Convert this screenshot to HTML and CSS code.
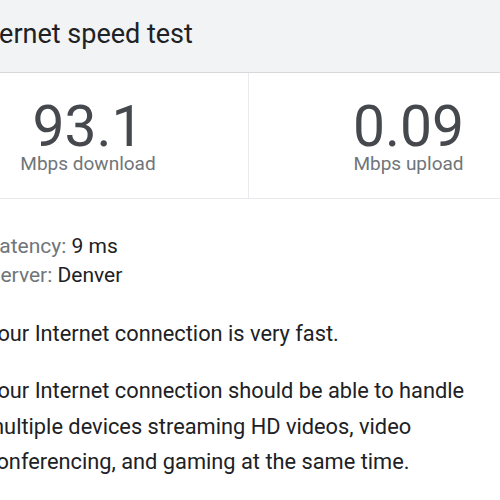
FILE: index.html
```html
<!DOCTYPE html>
<html>
<head>
<meta charset="utf-8">
<link rel="stylesheet" href="styles.css">
</head>
<body>
<div class="page">
  <div class="header">
    <h1 class="title">Internet speed test</h1>
  </div>
  <div class="stats">
    <div class="stat">
      <div class="value">93.1</div>
      <div class="unit">Mbps download</div>
    </div>
    <div class="stat">
      <div class="value">0.09</div>
      <div class="unit">Mbps upload</div>
    </div>
  </div>
  <div class="details">
    <div class="meta">
      <div class="row"><span class="label">Latency:</span> 9 ms</div>
      <div class="row"><span class="label">Server:</span> Denver</div>
    </div>
    <div class="text">
      <p class="summary">Your Internet connection is very fast.</p>
      <p class="desc">Your Internet connection should be able to handle multiple devices streaming HD videos, video conferencing, and gaming at the same time.</p>
    </div>
  </div>
</div>
</body>
</html>
```
FILE: styles.css
```css
html, body {
  margin: 0;
  padding: 0;
  background: #ffffff;
  overflow: hidden;
}
body {
  font-family: Roboto, "Liberation Sans", Arial, sans-serif;
  color: #202124;
}
.page {
  margin-left: -72px;
  width: 640px;
}
.header {
  background: #f1f3f4;
  border-bottom: 1px solid #d6d8db;
  height: 72px;
  padding-left: 40px;
}
.title {
  margin: 0;
  font-size: 27px;
  font-weight: 400;
  line-height: 68px;
  color: #202124;
}
.stats {
  display: grid;
  grid-template-columns: 320px 320px;
  border-bottom: 1px solid #e8eaed;
}
.stat {
  height: 125px;
  text-align: center;
  display: flex;
  flex-direction: column;
  align-items: center;
  padding-top: 28px;
  box-sizing: border-box;
}
.stat + .stat {
  border-left: 1px solid #e8eaed;
}
.value {
  font-size: 57px;
  line-height: 52px;
  color: #45484c;
}
.unit {
  font-size: 19px;
  line-height: 22px;
  color: #70757a;
}
.details {
  padding-left: 60px;
  padding-top: 33px;
}
.meta {
  font-size: 21px;
}
.row {
  line-height: 29px;
}
.label {
  color: #70757a;
}
.text {
  margin-left: -3px;
  font-size: 21.8px;
}
.summary {
  margin: 29px 0 0;
  line-height: 30px;
}
.desc {
  margin: 24px 0 0;
  line-height: 35.5px;
  width: 500px;
}
```
